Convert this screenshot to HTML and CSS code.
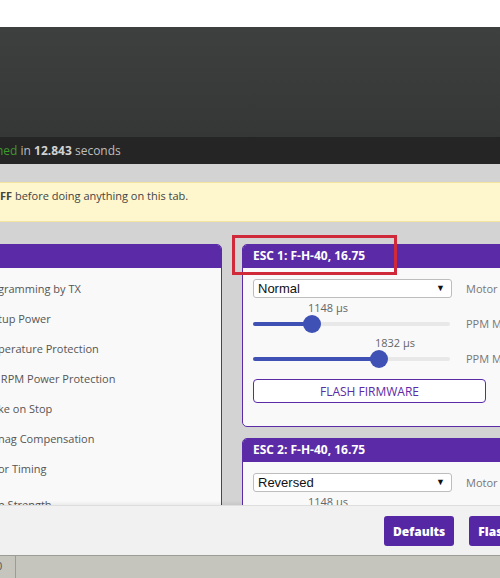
FILE: index.html
```html
<!DOCTYPE html>
<html>
<head>
<meta charset="utf-8">
<link rel="stylesheet" href="styles.css">
</head>
<body>
<div class="page">
  <div class="top-blank"></div>
  <div class="hero"></div>
  <div class="logbar"><span class="ok">hed</span> in <b>12.843</b> seconds</div>
  <div class="spacer"></div>
  <div class="note"><b>FF</b> before doing anything on this tab.</div>
  <div class="content">
    <div class="cols">
      <section class="panel features">
        <div class="panel-head"></div>
        <ul class="feat-list">
          <li>gramming by TX</li>
          <li>tup Power</li>
          <li>perature Protection</li>
          <li>&nbsp;RPM Power Protection</li>
          <li>ke on Stop</li>
          <li>nag Compensation</li>
          <li>or Timing</li>
          <li class="feat-last">n Strength</li>
        </ul>
      </section>
      <div class="esc-col">
        <div class="highlight"></div>
        <section class="panel esc">
          <div class="panel-head">ESC 1: F-H-40, 16.75</div>
          <div class="esc-body">
            <div class="row">
              <div class="select">Normal<span class="arrow">▼</span></div>
              <span class="lbl">Motor</span>
            </div>
            <div class="row slider-row">
              <div class="slider" style="--p:59px">
                <span class="val">1148 μs</span>
                <div class="track"><div class="fill"></div><div class="thumb"></div></div>
              </div>
              <span class="lbl lbl-slider">PPM M</span>
            </div>
            <div class="row slider-row">
              <div class="slider" style="--p:126px">
                <span class="val">1832 μs</span>
                <div class="track"><div class="fill"></div><div class="thumb"></div></div>
              </div>
              <span class="lbl lbl-slider">PPM M</span>
            </div>
            <button class="flash">FLASH FIRMWARE</button>
          </div>
        </section>
        <section class="panel esc">
          <div class="panel-head">ESC 2: F-H-40, 16.75</div>
          <div class="esc-body">
            <div class="row">
              <div class="select">Reversed<span class="arrow">▼</span></div>
              <span class="lbl">Motor</span>
            </div>
            <div class="row slider-row">
              <div class="slider" style="--p:59px">
                <span class="val">1148 μs</span>
                <div class="track"><div class="fill"></div><div class="thumb"></div></div>
              </div>
              <span class="lbl lbl-slider">PPM M</span>
            </div>
          </div>
        </section>
      </div>
    </div>
  </div>
  <div class="actions">
    <button class="btn">Defaults</button>
    <button class="btn btn-cut">Flash All</button>
  </div>
  <div class="status"><span class="cell">0</span></div>
</div>
</body>
</html>
```

FILE: styles.css
```css
html, body {
  margin: 0;
  padding: 0;
}
body {
  font-family: "Open Sans", "DejaVu Sans", sans-serif;
  background: #ffffff;
  width: 500px;
  height: 578px;
  overflow: hidden;
}
.page {
  display: flex;
  flex-direction: column;
  width: 500px;
  height: 578px;
  overflow: hidden;
}
.top-blank {
  height: 27px;
  background: #ffffff;
  flex: none;
}
.hero {
  height: 110px;
  flex: none;
  background: linear-gradient(#3e403f, #353736);
}
.logbar {
  height: 27px;
  flex: none;
  background: #252525;
  color: #bdbdbd;
  font-size: 12px;
  line-height: 27px;
  white-space: nowrap;
  text-indent: -4px;
}
.logbar .ok {
  color: #3f9a2e;
}
.logbar b {
  color: #d2d2d2;
  font-weight: 700;
}
.spacer {
  height: 18px;
  flex: none;
  background: #d3d3d3;
}
.note {
  flex: none;
  background: #fef6cc;
  border-top: 1px solid #f5e3a0;
  border-bottom: 1px solid #f5e3a0;
  color: #444444;
  font-size: 11px;
  line-height: 15px;
  padding-top: 5px;
  box-sizing: border-box;
  height: 40px;
  white-space: nowrap;
}
.note b {
  font-weight: 700;
}
.content {
  flex: 1;
  min-height: 0;
  overflow: hidden;
  background: #d3d3d3;
  padding-top: 22px;
}
.cols {
  display: flex;
  gap: 20px;
  margin-left: -40px;
  align-items: flex-start;
}
.panel {
  border: 1px solid #5b2ba7;
  border-radius: 5px;
  overflow: hidden;
  background: #f9f9f9;
  box-sizing: border-box;
}
.panel-head {
  background: #5b2ba7;
  color: #ffffff;
  height: 23px;
  line-height: 22px;
  font-size: 12px;
  font-weight: 700;
  padding-left: 10px;
  white-space: nowrap;
}
.features {
  width: 262px;
  flex: none;
  height: 400px;
}
.feat-list {
  list-style: none;
  margin: 0;
  padding: 6px 0 0 37px;
}
.feat-list li {
  height: 30px;
  line-height: 30px;
  font-size: 11px;
  color: #555555;
  white-space: nowrap;
}
.feat-list .feat-last {
  margin-top: 6px;
}
.esc-col {
  position: relative;
  flex: none;
  width: 300px;
  display: flex;
  flex-direction: column;
  gap: 11px;
}
.highlight {
  position: absolute;
  left: -10px;
  top: -9px;
  width: 165px;
  height: 40px;
  border: 3px solid #d02a3a;
  box-sizing: border-box;
  z-index: 2;
}
.esc {
  width: 300px;
}
.esc-body {
  padding: 11px 10px 23px 10px;
}
.row {
  display: grid;
  grid-template-columns: 199px auto;
  column-gap: 14px;
  align-items: center;
}
.select {
  height: 19px;
  box-sizing: border-box;
  border: 1px solid #bdbdbd;
  border-radius: 3px;
  background: #ffffff;
  font-family: "Liberation Sans", Arial, sans-serif;
  font-size: 13px;
  line-height: 17px;
  color: #111111;
  padding-left: 4px;
  padding-right: 6px;
  display: flex;
  justify-content: space-between;
}
.arrow {
  font-size: 9px;
  color: #111111;
}
.lbl {
  font-size: 11px;
  color: #777777;
  white-space: nowrap;
}
.slider-row {
  margin-top: 3px;
  align-items: end;
}
.slider {
  width: 197px;
  position: relative;
}
.val {
  display: block;
  height: 14px;
  line-height: 14px;
  font-size: 11px;
  color: #666666;
  margin-left: calc(var(--p) - 4px);
  white-space: nowrap;
}
.track {
  position: relative;
  height: 18px;
}
.track::before {
  content: "";
  position: absolute;
  left: 0;
  right: 0;
  top: 7px;
  height: 4px;
  border-radius: 2px;
  background: #e8e8e8;
}
.fill {
  position: absolute;
  left: 0;
  top: 7px;
  height: 4px;
  border-radius: 2px;
  width: var(--p);
  background: #3f51b5;
}
.thumb {
  position: absolute;
  top: 0;
  left: calc(var(--p) - 9px);
  width: 18px;
  height: 18px;
  border-radius: 50%;
  background: #3f51b5;
}
.lbl-slider {
  line-height: 18px;
}
.flash {
  display: block;
  margin-top: 11px;
  width: 233px;
  height: 24px;
  border: 1px solid #5b2ba7;
  border-radius: 4px;
  background: #ffffff;
  color: #5b2ba7;
  font-family: "Open Sans", sans-serif;
  font-size: 12px;
  padding: 0;
}
.actions {
  flex: none;
  height: 50px;
  box-sizing: border-box;
  background: #f1f1f1;
  border-top: 1px solid #dedede;
  box-shadow: 0 -2px 3px rgba(0,0,0,0.06);
  display: flex;
  gap: 15px;
  padding: 10px 0 0 384px;
  white-space: nowrap;
}
.btn {
  flex: none;
  height: 30px;
  padding: 0 9px;
  border: none;
  border-radius: 3px;
  background: #5527a4;
  color: #ffffff;
  font-family: "Open Sans", sans-serif;
  font-size: 12px;
  font-weight: 800;
  min-width: 70px;
  white-space: nowrap;
}
.btn-cut {
  text-align: left;
}
.status {
  flex: none;
  height: 23px;
  box-sizing: border-box;
  background: #c5c5bd;
  border-top: 1px solid #9c9c96;
  display: flex;
}
.cell {
  width: 15px;
  border-right: 1px solid #9c9c96;
  font-size: 11px;
  line-height: 20px;
  color: #555555;
  text-indent: -4px;
  overflow: hidden;
}
```
